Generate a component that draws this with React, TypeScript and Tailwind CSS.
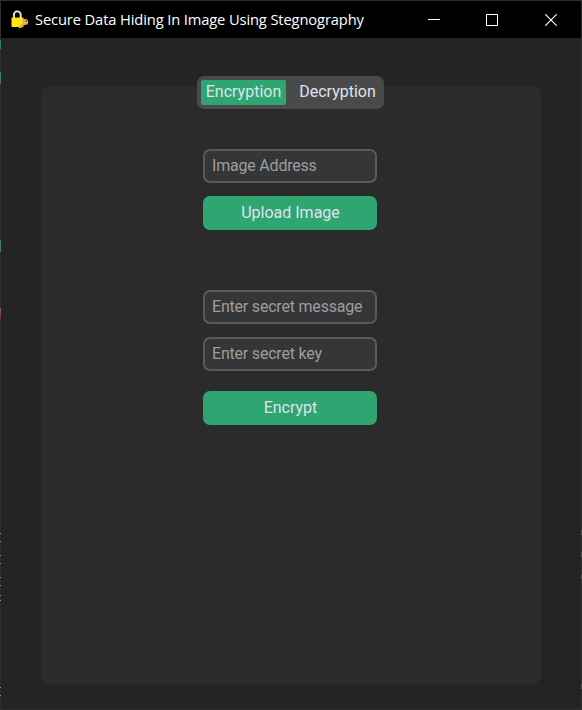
import type { ReactNode } from "react";

function LockIcon() {
  return (
    <svg className="ml-[10px] h-[20px] w-[19px] shrink-0" viewBox="0 0 19 20">
      <path d="M2.9 8.5V4.8a3.3 3.3 0 0 1 6.8 0V8.5" fill="none" stroke="#e9e9e9" strokeWidth="1.9" />
      <rect x="0.5" y="7.5" width="12" height="9.5" rx="0.8" fill="#ffe70a" />
      <path d="M14 12.5 8 18M9.8 16.2l1.4 1.2" stroke="#f0a055" strokeWidth="1.9" fill="none" />
      <circle cx="14.2" cy="12" r="3" fill="#f6a45a" />
      <circle cx="15.3" cy="11" r="0.7" fill="#3c210d" />
    </svg>
  );
}

function TitleBar() {
  return (
    <header className="flex h-[37px] shrink-0 items-center bg-black text-white">
      <LockIcon />
      <h1 className="ml-[5px] w-[340px] whitespace-nowrap pb-[2px] font-['Open_Sans','Noto_Sans',sans-serif] text-[14.7px] leading-5 tracking-[-0.12px]">
        Secure Data Hiding In Image Using Stegnography
      </h1>
      <div className="ml-auto flex">
        <button aria-label="Minimize" className="flex h-[37px] w-[58px] items-center justify-center">
          <svg className="h-3 w-3" viewBox="0 0 12 12"><path d="M0 5.5h12" stroke="currentColor" /></svg>
        </button>
        <button aria-label="Maximize" className="flex h-[37px] w-[58px] items-center justify-center">
          <svg className="h-3 w-3" viewBox="0 0 12 12"><path d="M.5.5h11v11H.5z" stroke="currentColor" fill="none" /></svg>
        </button>
        <button aria-label="Close" className="flex h-[37px] w-[60px] items-center justify-center">
          <svg className="h-3 w-3" viewBox="0 0 12 12"><path d="M.3.3l11.4 11.4M11.7.3.3 11.7" stroke="currentColor" strokeWidth="1.2" /></svg>
        </button>
      </div>
    </header>
  );
}

function Field({ children }: { children: ReactNode }) {
  return (
    <div className="flex h-[34px] w-[174px] items-center whitespace-nowrap rounded-[7px] border-2 border-[#565b5e] bg-[#343638] pl-[7px] tracking-[-0.2px] text-[#9e9e9e]">
      {children}
    </div>
  );
}

function ActionButton({ children }: { children: ReactNode }) {
  return (
    <button className="flex h-[34px] w-[174px] items-center justify-center rounded-[7px] bg-[#2fa572] pl-px text-[#dce4ee]">
      {children}
    </button>
  );
}

// Slivers of the desktop visible along the window's outer edges.
function EdgeMarks() {
  return (
    <>
      <span className="absolute -left-px top-[39px] h-[9px] w-px bg-[#387c65]" />
      <span className="absolute -left-px top-[71px] h-[12px] w-px bg-[#41777b]" />
      <span className="absolute -left-px top-[239px] h-[12px] w-px bg-[#418566]" />
      <span className="absolute -left-px top-[307px] h-[12px] w-px bg-linear-to-b from-[#896069] to-[#6d3028]" />
      {[532, 540, 554, 562, 576, 584, 594, 599, 686, 694].map((y) => (
        <span key={y} className="absolute -left-px h-px w-px bg-[#969696]" style={{ top: y }} />
      ))}
      {[529, 551, 573, 683].map((y) => (
        <span key={y} className="absolute -right-px h-[5px] w-px bg-linear-to-b from-[#3b5c52] to-[#40506f]" style={{ top: y }} />
      ))}
    </>
  );
}

export default function App() {
  return (
    <div className="relative flex h-[710px] w-[582px] flex-col border border-[#2f2f2f] bg-[#242424] font-[Roboto,sans-serif] text-[16px] leading-5">
      <TitleBar />
      <main className="mx-[40px] mt-[48px] flex h-[598px] flex-col items-center rounded-[8px] bg-[#2b2b2b]">
        <nav className="-mt-[10px] ml-[-1px] flex h-[33px] w-[187px] items-center rounded-[7px] bg-[#4a4a4a] p-1 text-[#dce4ee]">
          <button className="flex h-[25px] w-[85px] shrink-0 items-center justify-center rounded-[2px] bg-[#2fa572] pb-[2px]">Encryption</button>
          <button className="ml-[9px] flex h-[25px] w-[85px] shrink-0 items-center justify-center pb-[2px]">Decryption</button>
        </nav>
        <section className="mt-[40px] mr-[2px] flex flex-col">
          <Field>Image Address</Field>
          <div className="mt-[13px]"><ActionButton>Upload Image</ActionButton></div>
          <div className="mt-[60px]"><Field>Enter secret message</Field></div>
          <div className="mt-[13px]"><Field>Enter secret key</Field></div>
          <div className="mt-[20px]"><ActionButton>Encrypt</ActionButton></div>
        </section>
      </main>
      <EdgeMarks />
    </div>
  );
}
